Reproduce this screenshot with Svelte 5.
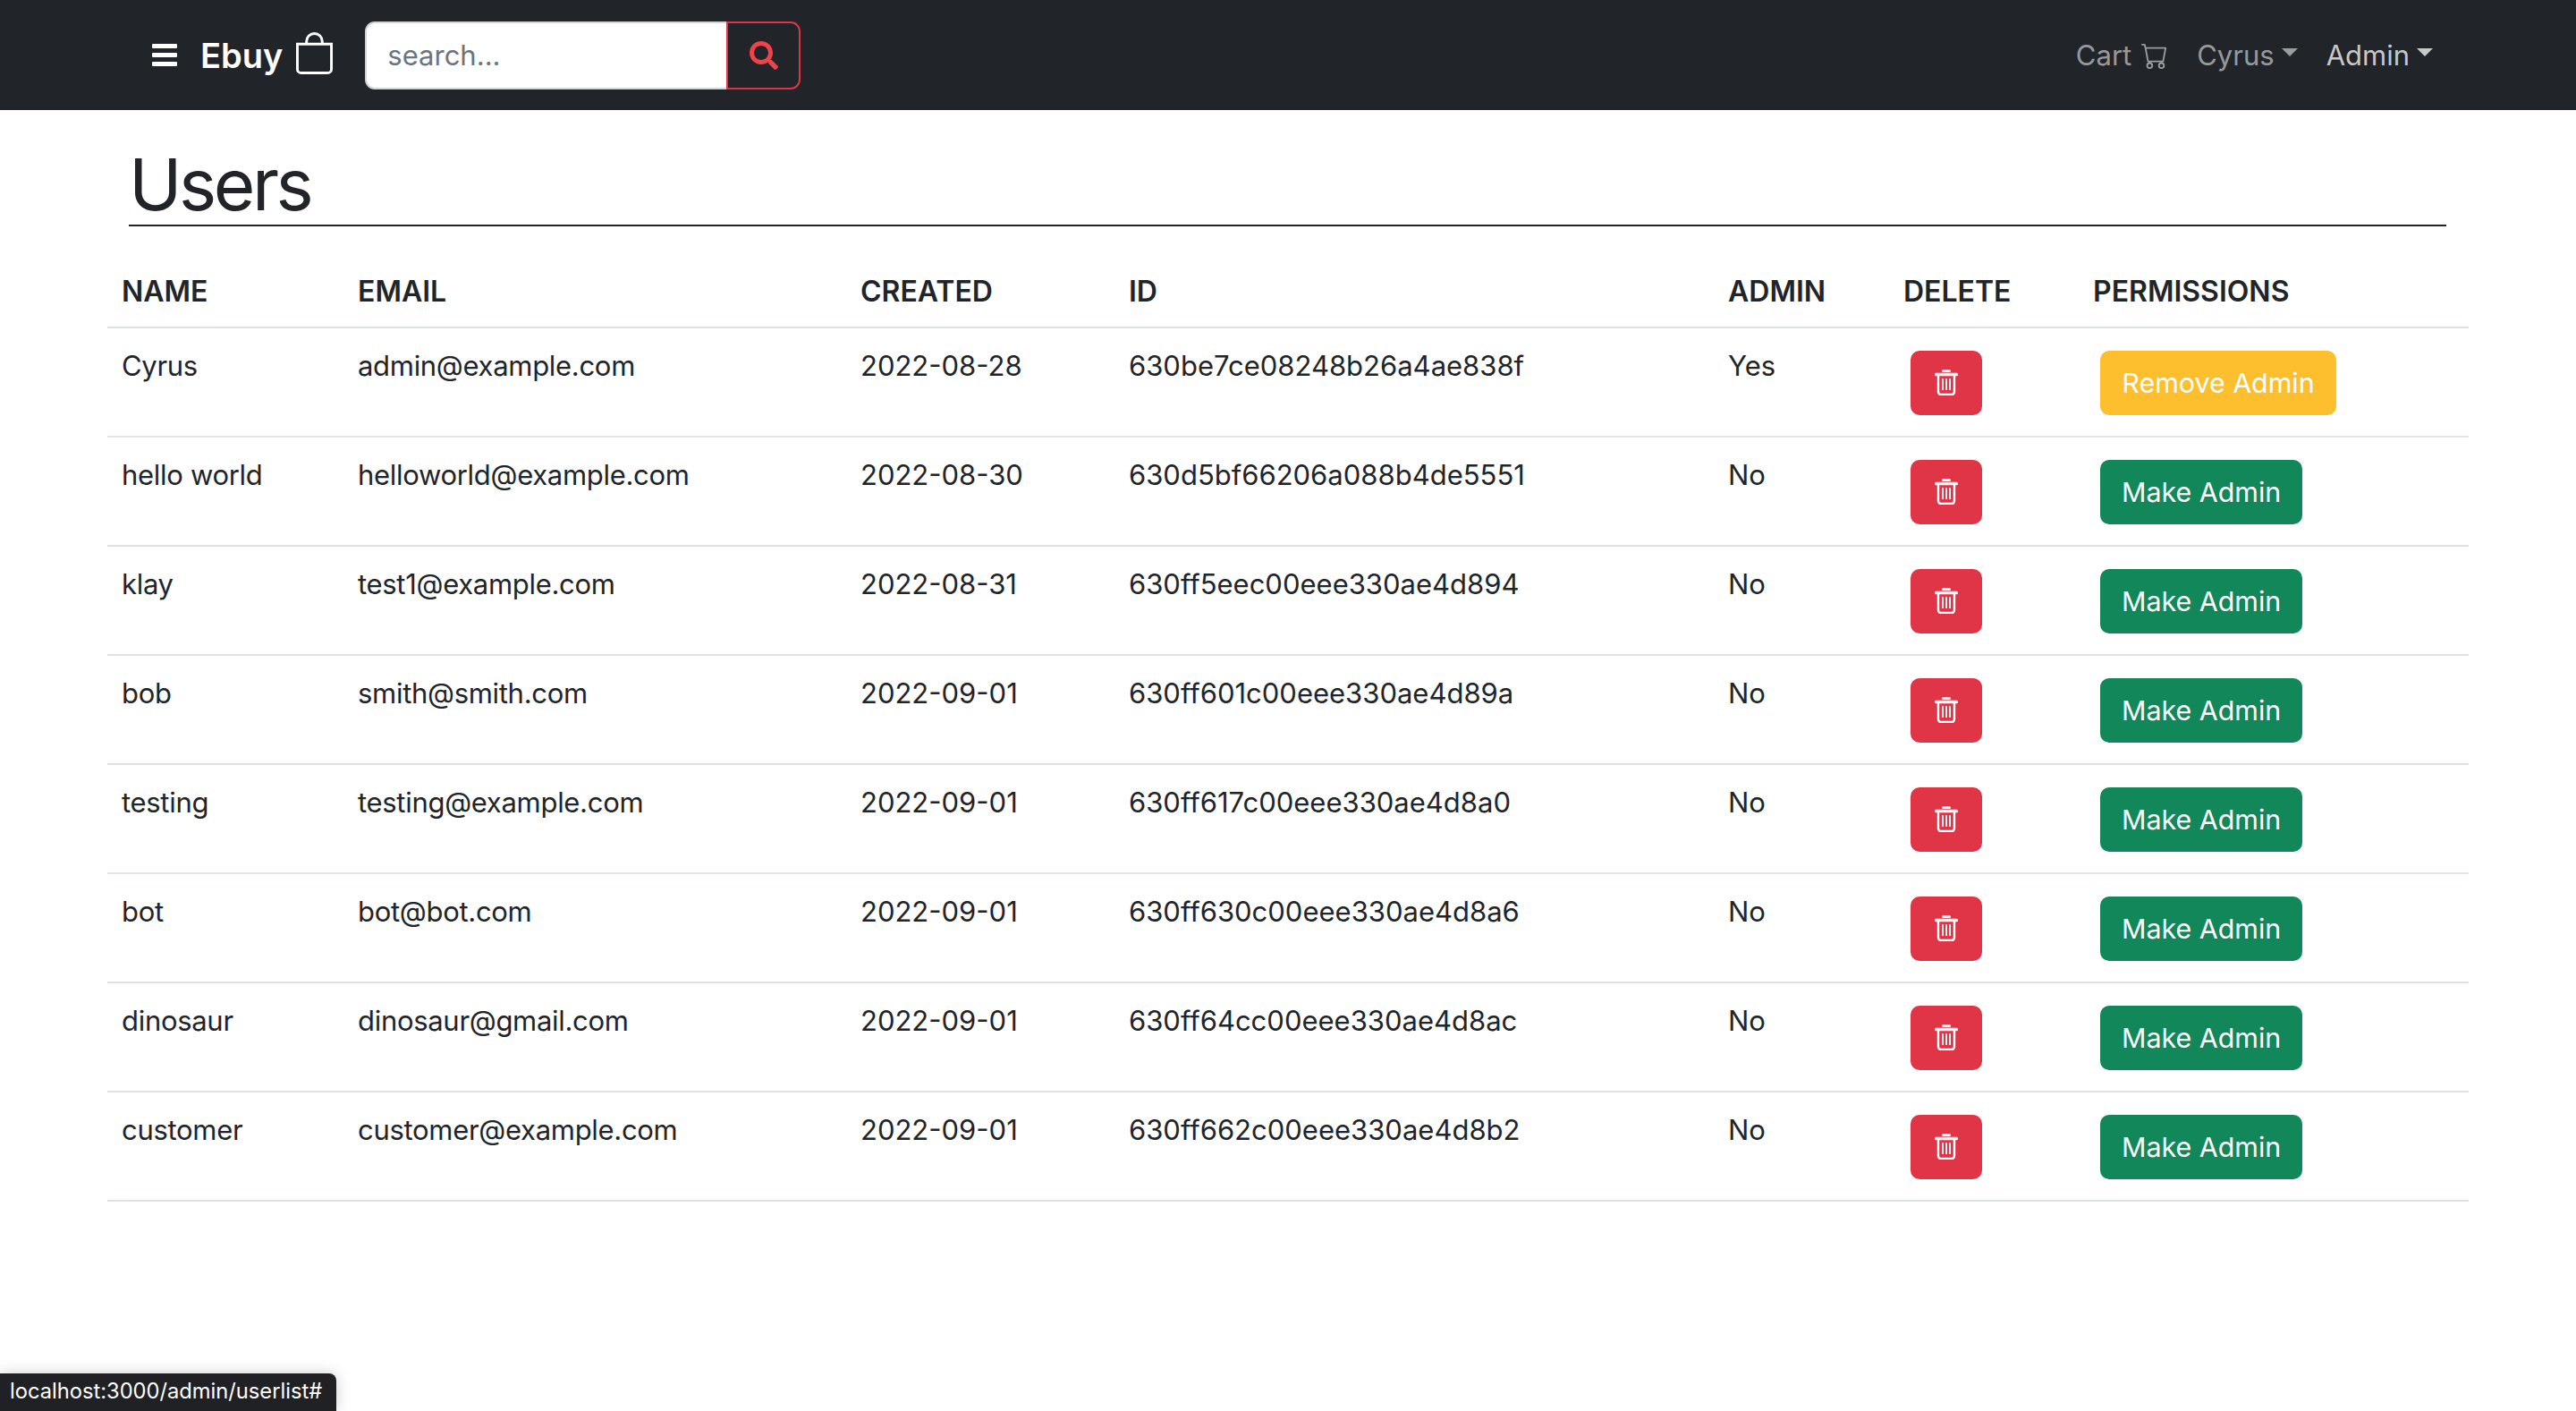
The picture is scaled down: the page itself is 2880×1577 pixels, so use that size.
<script>
  const users = [
    { name: 'Cyrus', email: 'admin@example.com', created: '2022-08-28', id: '630be7ce08248b26a4ae838f', admin: true },
    { name: 'hello world', email: 'helloworld@example.com', created: '2022-08-30', id: '630d5bf66206a088b4de5551', admin: false },
    { name: 'klay', email: 'test1@example.com', created: '2022-08-31', id: '630ff5eec00eee330ae4d894', admin: false },
    { name: 'bob', email: 'smith@smith.com', created: '2022-09-01', id: '630ff601c00eee330ae4d89a', admin: false },
    { name: 'testing', email: 'testing@example.com', created: '2022-09-01', id: '630ff617c00eee330ae4d8a0', admin: false },
    { name: 'bot', email: 'bot@bot.com', created: '2022-09-01', id: '630ff630c00eee330ae4d8a6', admin: false },
    { name: 'dinosaur', email: 'dinosaur@gmail.com', created: '2022-09-01', id: '630ff64cc00eee330ae4d8ac', admin: false },
    { name: 'customer', email: 'customer@example.com', created: '2022-09-01', id: '630ff662c00eee330ae4d8b2', admin: false }
  ];
</script>

<div class="page">
  <nav class="navbar">
    <button class="burger" aria-label="menu">
      <span></span><span></span><span></span>
    </button>
    <a class="brand" href="#top">Ebuy</a>
    <svg class="bag" viewBox="1 0 14 16" preserveAspectRatio="none" fill="currentColor">
      <path d="M8 1a2.5 2.5 0 0 1 2.5 2.5V4h-5v-.5A2.5 2.5 0 0 1 8 1zm3.5 3v-.5a3.5 3.5 0 1 0-7 0V4H1v10a2 2 0 0 0 2 2h10a2 2 0 0 0 2-2V4h-3.5zM2 5h12v9a1 1 0 0 1-1 1H3a1 1 0 0 1-1-1V5z" />
    </svg>
    <form class="search">
      <input type="text" placeholder="search..." />
      <button type="button" aria-label="search">
        <svg viewBox="0 0 512 512" fill="currentColor">
          <path d="M505 442.7L405.3 343c-4.5-4.5-10.6-7-17-7H372c27.6-35.3 44-79.7 44-128C416 93.1 322.9 0 208 0S0 93.1 0 208s93.1 208 208 208c48.3 0 92.7-16.4 128-44v16.3c0 6.4 2.5 12.5 7 17l99.7 99.7c9.4 9.4 24.6 9.4 33.9 0l28.3-28.3c9.4-9.4 9.4-24.6.1-34zM208 336c-70.7 0-128-57.2-128-128 0-70.7 57.2-128 128-128 70.7 0 128 57.2 128 128 0 70.7-57.2 128-128 128z" />
        </svg>
      </button>
    </form>
    <div class="links">
      <a class="link cart" href="#top">
        Cart
        <svg viewBox="0 0 16 16" fill="currentColor">
          <path d="M0 1.5A.5.5 0 0 1 .5 1H2a.5.5 0 0 1 .485.379L2.89 3H14.5a.5.5 0 0 1 .491.592l-1.5 8A.5.5 0 0 1 13 12H4a.5.5 0 0 1-.491-.408L2.01 3.607 1.61 2H.5a.5.5 0 0 1-.5-.5zM3.102 4l1.313 7h8.17l1.313-7H3.102zM5 12a2 2 0 1 0 0 4 2 2 0 0 0 0-4zm7 0a2 2 0 1 0 0 4 2 2 0 0 0 0-4zm-7 1a1 1 0 1 1 0 2 1 1 0 0 1 0-2zm7 0a1 1 0 1 1 0 2 1 1 0 0 1 0-2z" />
        </svg>
      </a>
      <a class="link toggle" href="#top">Cyrus</a>
      <a class="link toggle active" href="#top">Admin</a>
    </div>
  </nav>

  <main>
    <h1>Users</h1>
    <table>
      <colgroup>
        <col style="width: 264px" />
        <col style="width: 562px" />
        <col style="width: 300px" />
        <col style="width: 670px" />
        <col style="width: 196px" />
        <col style="width: 212px" />
        <col style="width: 436px" />
      </colgroup>
      <thead>
        <tr>
          <th>NAME</th>
          <th>EMAIL</th>
          <th>CREATED</th>
          <th>ID</th>
          <th>ADMIN</th>
          <th>DELETE</th>
          <th>PERMISSIONS</th>
        </tr>
      </thead>
      <tbody>
        {#each users as user}
          <tr>
            <td class="narrow">{user.name}</td>
            <td class="narrow">{user.email}</td>
            <td>{user.created}</td>
            <td>{user.id}</td>
            <td>{user.admin ? 'Yes' : 'No'}</td>
            <td>
              <button class="btn danger" aria-label="delete">
                <svg viewBox="0 0 26 30" fill="none" stroke="currentColor" stroke-width="2.4">
                  <path d="M1.5 6.5h23" stroke-width="3.4" stroke-linecap="round" />
                  <path d="M9.5 2.4h7" stroke-width="3" stroke-linecap="round" />
                  <path d="M4 7v19a3 3 0 0 0 3 3h12a3 3 0 0 0 3-3V7" />
                  <path d="M9 11v13M13 11v13M17 11v13" stroke-width="2" />
                </svg>
              </button>
            </td>
            <td>
              {#if user.admin}
                <button class="btn warning">Remove Admin</button>
              {:else}
                <button class="btn success">Make Admin</button>
              {/if}
            </td>
          </tr>
        {/each}
      </tbody>
    </table>
  </main>

  <div class="status">localhost:3000/admin/userlist#</div>
</div>

<style>
  :global(body) {
    margin: 0;
    background: #fff;
  }

  .page {
    position: relative;
    height: 1577px;
    overflow: hidden;
    font-family: Inter, "Liberation Sans", sans-serif;
    font-size: 31px;
    line-height: 48px;
    color: #212529;
  }

  .navbar {
    height: 123px;
    background: #212529;
    display: flex;
    align-items: center;
    padding: 0 160px 0 170px;
    box-sizing: border-box;
  }

  .burger {
    width: 28px;
    height: 25px;
    margin-right: 26px;
    padding: 0;
    border: none;
    background: none;
    display: flex;
    flex-direction: column;
    justify-content: space-between;
  }

  .burger span {
    height: 5px;
    border-radius: 1px;
    background: #fff;
  }

  .brand {
    color: #fff;
    font-size: 38px;
    font-weight: 600;
    text-decoration: none;
  }

  .bag {
    width: 41px;
    height: 47px;
    margin: -4px 36px 0 15px;
    color: #fff;
  }

  .search {
    display: flex;
    height: 76px;
    margin: 0;
  }

  .search input {
    width: 404px;
    box-sizing: border-box;
    padding: 0 23px;
    border: 2px solid #ced4da;
    border-right: none;
    border-radius: 11px 0 0 11px;
    background: #fff;
    font: inherit;
    color: #212529;
    outline: none;
  }

  .search input::placeholder {
    color: #6c757d;
    opacity: 1;
  }

  .search button {
    width: 83px;
    padding: 0;
    border: 2px solid #dc3545;
    border-radius: 0 11px 11px 0;
    background: transparent;
    color: #f04349;
    display: flex;
    align-items: center;
    justify-content: center;
  }

  .search button svg {
    width: 32px;
    height: 32px;
  }

  .links {
    margin-left: auto;
    display: flex;
    align-items: center;
    gap: 32px;
  }

  .link {
    color: rgba(255, 255, 255, 0.55);
    text-decoration: none;
    display: flex;
    align-items: center;
  }

  .link.active {
    color: rgba(255, 255, 255, 0.75);
  }

  .cart svg {
    width: 30px;
    height: 30px;
    margin-left: 11px;
  }

  .toggle::after {
    content: "";
    margin-left: 8px;
    margin-top: -6px;
    border-top: 9px solid currentColor;
    border-left: 9.5px solid transparent;
    border-right: 9.5px solid transparent;
  }

  main {
    padding: 0 120px;
  }

  h1 {
    margin: 0 25px 0 24px;
    height: 130px;
    box-sizing: border-box;
    padding: 36px 0 0;
    border-bottom: 2px solid #212529;
    font-size: 80px;
    font-weight: 400;
    line-height: 94px;
    letter-spacing: -3.5px;
  }

  table {
    width: 2640px;
    table-layout: fixed;
    border-collapse: collapse;
  }

  th {
    height: 113px;
    box-sizing: border-box;
    padding: 49px 16px 0;
    border-bottom: 2px solid #dee2e6;
    font-size: 32px;
    font-weight: 600;
    text-align: left;
    vertical-align: top;
  }

  td {
    height: 122px;
    box-sizing: border-box;
    padding: 18px 16px 14px;
    border-bottom: 2px solid #dee2e6;
    vertical-align: top;
  }

  .narrow {
    letter-spacing: -0.3px;
  }

  .btn {
    display: block;
    height: 72px;
    margin: 7px 0 0 8px;
    padding: 0 24px;
    border: none;
    border-radius: 10px;
    color: #fff;
    font: inherit;
    font-size: 30.4px;
    white-space: nowrap;
  }

  .danger {
    width: 80px;
    padding: 0;
    background: #e03546;
    display: flex;
    align-items: center;
    justify-content: center;
  }

  .danger svg {
    width: 26px;
    height: 30px;
    margin-top: -2px;
  }

  .warning {
    width: 264px;
    background: #fdbf2d;
  }

  .success {
    width: 226px;
    background: #12875a;
  }

  .status {
    position: absolute;
    left: 0;
    bottom: 0;
    width: 376px;
    height: 42px;
    box-sizing: border-box;
    padding-left: 11px;
    border-radius: 0 8px 0 0;
    background: #202124;
    box-shadow: 0 0 16px rgba(0, 0, 0, 0.2);
    color: #fff;
    font-size: 23.7px;
    line-height: 40px;
    white-space: nowrap;
  }
</style>
